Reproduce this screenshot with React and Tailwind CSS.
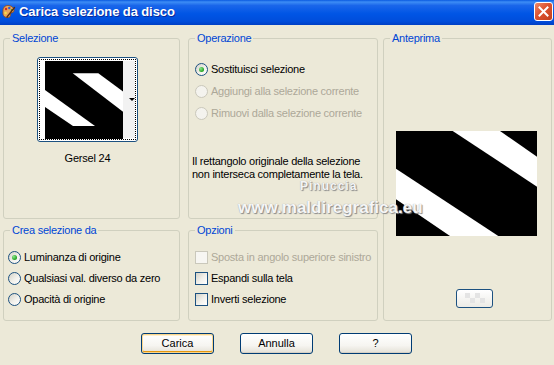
import React from "react";

const font = "font-['Liberation_Sans',Arial,sans-serif]";

const Radio = ({ checked, disabled }) => (
  <span
    className={`w-[13px] h-[13px] rounded-full border flex items-center justify-center shrink-0 ${
      disabled
        ? "border-[#CAC8BB] bg-[#F4F3EE]"
        : "border-[#1C5180] bg-[linear-gradient(135deg,#D4D2C8_0%,#F2F1EC_55%,#FFFFFF_100%)]"
    }`}
  >
    {checked && (
      <span className="w-[5px] h-[5px] rounded-full bg-[radial-gradient(circle_at_35%_35%,#8BE68B,#21A121_70%)]" />
    )}
  </span>
);

const Check = ({ disabled }) => (
  <span
    className={`w-[13px] h-[13px] border shrink-0 ${
      disabled
        ? "border-[#CAC8BB] bg-[#F7F6F2]"
        : "border-[#1C5180] bg-[linear-gradient(135deg,#D4D2C8_0%,#F2F1EC_55%,#FFFFFF_100%)]"
    }`}
  />
);

const Option = ({ type, checked, disabled, label, h = "h-[22px]" }) => (
  <div className={`flex items-center gap-[3px] ${h}`}>
    {type === "radio" ? <Radio checked={checked} disabled={disabled} /> : <Check disabled={disabled} />}
    <span className={`tracking-[-0.25px] ${disabled ? "text-[#ACA899]" : "text-black"}`}>{label}</span>
  </div>
);

const Group = ({ title, className, children }) => (
  <fieldset className={`min-w-0 m-0 p-0 border border-[#D0D0BF] rounded-[3px] ${className}`}>
    <legend className="ml-[6px] px-[2px] text-[#0046D5] leading-[13px] tracking-[-0.25px]">{title}</legend>
    {children}
  </fieldset>
);

const XpButton = ({ label, isDefault }) => (
  <button
    className={`w-[73px] h-[21px] border border-[#003C74] rounded-[3px] text-black leading-none bg-[linear-gradient(180deg,#FFFFFF_0%,#F6F5F1_60%,#E3E0D6_100%)] ${
      isDefault
        ? "shadow-[inset_0_0_0_1px_#FBD68C,inset_0_1px_0_1px_#FFF0CF,inset_0_-1px_0_1px_#E5970F]"
        : "shadow-[inset_0_-1px_0_#D6D0C5]"
    }`}
  >
    {label}
  </button>
);

const TitleIcon = () => (
  <svg width="15" height="15" viewBox="0 0 15 15">
    <path d="M2 6 C2 3 5 1 8 1.5 C11 2 13 4 13 6.5 C13 8.5 11 8.5 10 9 C9 9.5 10 11 9 12.5 C8 14 4 14 2.5 11.5 C1.5 10 2 8 2 6 Z" fill="#E9A45A" stroke="#8A4A1C" strokeWidth="0.8" />
    <circle cx="5" cy="5" r="1.2" fill="#D8281E" />
    <circle cx="8.3" cy="4" r="1.2" fill="#2A5BD8" />
    <circle cx="10.8" cy="6" r="1.1" fill="#2FA034" />
    <circle cx="4.6" cy="9" r="1.2" fill="#F4E04A" />
    <path d="M6 13 L13.5 3.5" stroke="#5A2E10" strokeWidth="1.4" strokeLinecap="round" />
  </svg>
);

const Thumb = () => (
  <svg width="78" height="78" viewBox="0 0 78 78" className="block">
    <rect width="78" height="78" fill="#000" />
    <polygon points="27.7,12.3 53.3,12.3 78,30.5 78,50.7" fill="#fff" />
    <polygon points="0,29 50,65 28,65 0,46" fill="#fff" />
  </svg>
);

const Preview = () => (
  <svg width="141" height="105" viewBox="0 0 141 105" className="block">
    <rect width="141" height="105" fill="#000" />
    <polygon points="56.7,0 104,0 141,25.7 141,55.7" fill="#fff" />
    <polygon points="0,37.7 102.3,105 54,105 0,68.3" fill="#fff" />
  </svg>
);

export default function App() {
  return (
    <div className={`relative w-[554px] h-[365px] overflow-hidden bg-[#ECE9D8] text-[11px] ${font}`}>
      {/* title bar */}
      <div className="h-[25px] flex items-center bg-[linear-gradient(180deg,#0A5AE0_0%,#3D8DF5_8%,#1A66EA_22%,#0055E5_55%,#004DDB_85%,#003FC4_100%)]">
        <div className="ml-[1px] mt-[-2px]">
          <TitleIcon />
        </div>
        <span className="ml-[3px] mt-[-1px] text-white font-bold text-[13px] tracking-[-0.1px] [text-shadow:1px_1px_0_#0A2A9C]">
          Carica selezione da disco
        </span>
        <div className="ml-auto mr-[1px] mt-[-2px] w-[19px] h-[19px] rounded-[3px] border border-white bg-[linear-gradient(135deg,#EE8A6A_0%,#DD5330_45%,#C2401E_100%)] flex items-center justify-center">
          <svg width="11" height="11" viewBox="0 0 11 11">
            <path d="M1.5 1.5 L9.5 9.5 M9.5 1.5 L1.5 9.5" stroke="#fff" strokeWidth="2" strokeLinecap="square" />
          </svg>
        </div>
      </div>

      {/* body */}
      <div className="pt-[7px] pl-[3px] pr-[2px]">
        <div className="flex">
          {/* left column */}
          <div className="w-[177px] flex flex-col gap-[5px]">
            <Group title="Selezione" className="h-[187px]">
              <div className="ml-[33px] mt-[12px] w-[101px] flex flex-col items-center">
                <div className="w-[101px] h-[85px] border border-[#1C5180] rounded-[3px] bg-white p-[1px]">
                  <div className="h-full border border-dotted border-black flex items-center">
                    <div className="ml-[5px]">
                      <Thumb />
                    </div>
                    <div className="flex-1 self-stretch my-[1px] bg-[#F2F2F2] flex items-center justify-end pr-[0px]">
                      <span className="w-0 h-0 border-l-[3px] border-r-[3px] border-t-[3px] border-l-transparent border-r-transparent border-t-black" />
                    </div>
                  </div>
                </div>
                <span className="mt-[10px] leading-[13px] text-black tracking-[-0.2px]">Gersel 24</span>
              </div>
            </Group>
            <Group title="Crea selezione da" className="h-[97px]">
              <div className="pl-[4px] pt-[10px]">
                <Option type="radio" checked label="Luminanza di origine" h="h-[21px]" />
                <Option type="radio" label="Qualsiasi val. diverso da zero" h="h-[21px]" />
                <Option type="radio" label="Opacità di origine" h="h-[21px]" />
              </div>
            </Group>
          </div>

          {/* middle column */}
          <div className="ml-[8px] w-[190px] flex flex-col gap-[5px]">
            <Group title="Operazione" className="h-[187px]">
              <div className="pl-[6px] pt-[13px]">
                <Option type="radio" checked label="Sostituisci selezione" />
                <Option type="radio" disabled label="Aggiungi alla selezione corrente" />
                <Option type="radio" disabled label="Rimuovi dalla selezione corrente" />
              </div>
              <p className="ml-[3px] mt-[31px] leading-[13px] text-black tracking-[-0.25px]">
                Il rettangolo originale della selezione
                <br />
                non interseca completamente la tela.
              </p>
            </Group>
            <Group title="Opzioni" className="h-[97px]">
              <div className="pl-[6px] pt-[10px]">
                <Option type="check" disabled label="Sposta in angolo superiore sinistro" h="h-[21px]" />
                <Option type="check" label="Espandi sulla tela" h="h-[21px]" />
                <Option type="check" label="Inverti selezione" h="h-[21px]" />
              </div>
            </Group>
          </div>

          {/* right column */}
          <Group title="Anteprima" className="ml-[5px] w-[169px] h-[289px]">
            <div className="ml-[12px] mt-[86px]">
              <Preview />
            </div>
            <div className="ml-[72px] mt-[53px] w-[37px] h-[19px] border border-[#1C5180] rounded-[3px] bg-[linear-gradient(180deg,#FFFFFF,#ECEBE6)] flex items-center justify-center">
              <svg width="20" height="11" viewBox="0 0 20 11">
                <rect x="0" y="0" width="5" height="5" fill="#E4E4E4" />
                <rect x="10" y="0" width="5" height="5" fill="#E4E4E4" />
                <rect x="5" y="5" width="5" height="5" fill="#E4E4E4" />
                <rect x="15" y="5" width="5" height="5" fill="#E4E4E4" />
              </svg>
            </div>
          </Group>
        </div>

        {/* buttons */}
        <div className="mt-[12px] ml-[138px] flex gap-[26px]">
          <XpButton label="Carica" isDefault />
          <XpButton label="Annulla" />
          <XpButton label="?" />
        </div>
      </div>

      {/* watermark */}
      <div className="pointer-events-none absolute left-[300px] top-[177px] text-[12px] font-bold tracking-[1px] text-[#F4F4F4] [text-shadow:1px_1px_1px_#8A8A8A,0_0_1px_#9A9A9A]">
        Pinuccia
      </div>
      <div className="pointer-events-none absolute left-[238px] top-[195px] text-[17px] font-bold text-[#F6F6F6] [text-shadow:1px_1px_1px_#8A8A8A,0_0_1px_#9A9A9A]">
        www.maldiregrafica.eu
      </div>
    </div>
  );
}
